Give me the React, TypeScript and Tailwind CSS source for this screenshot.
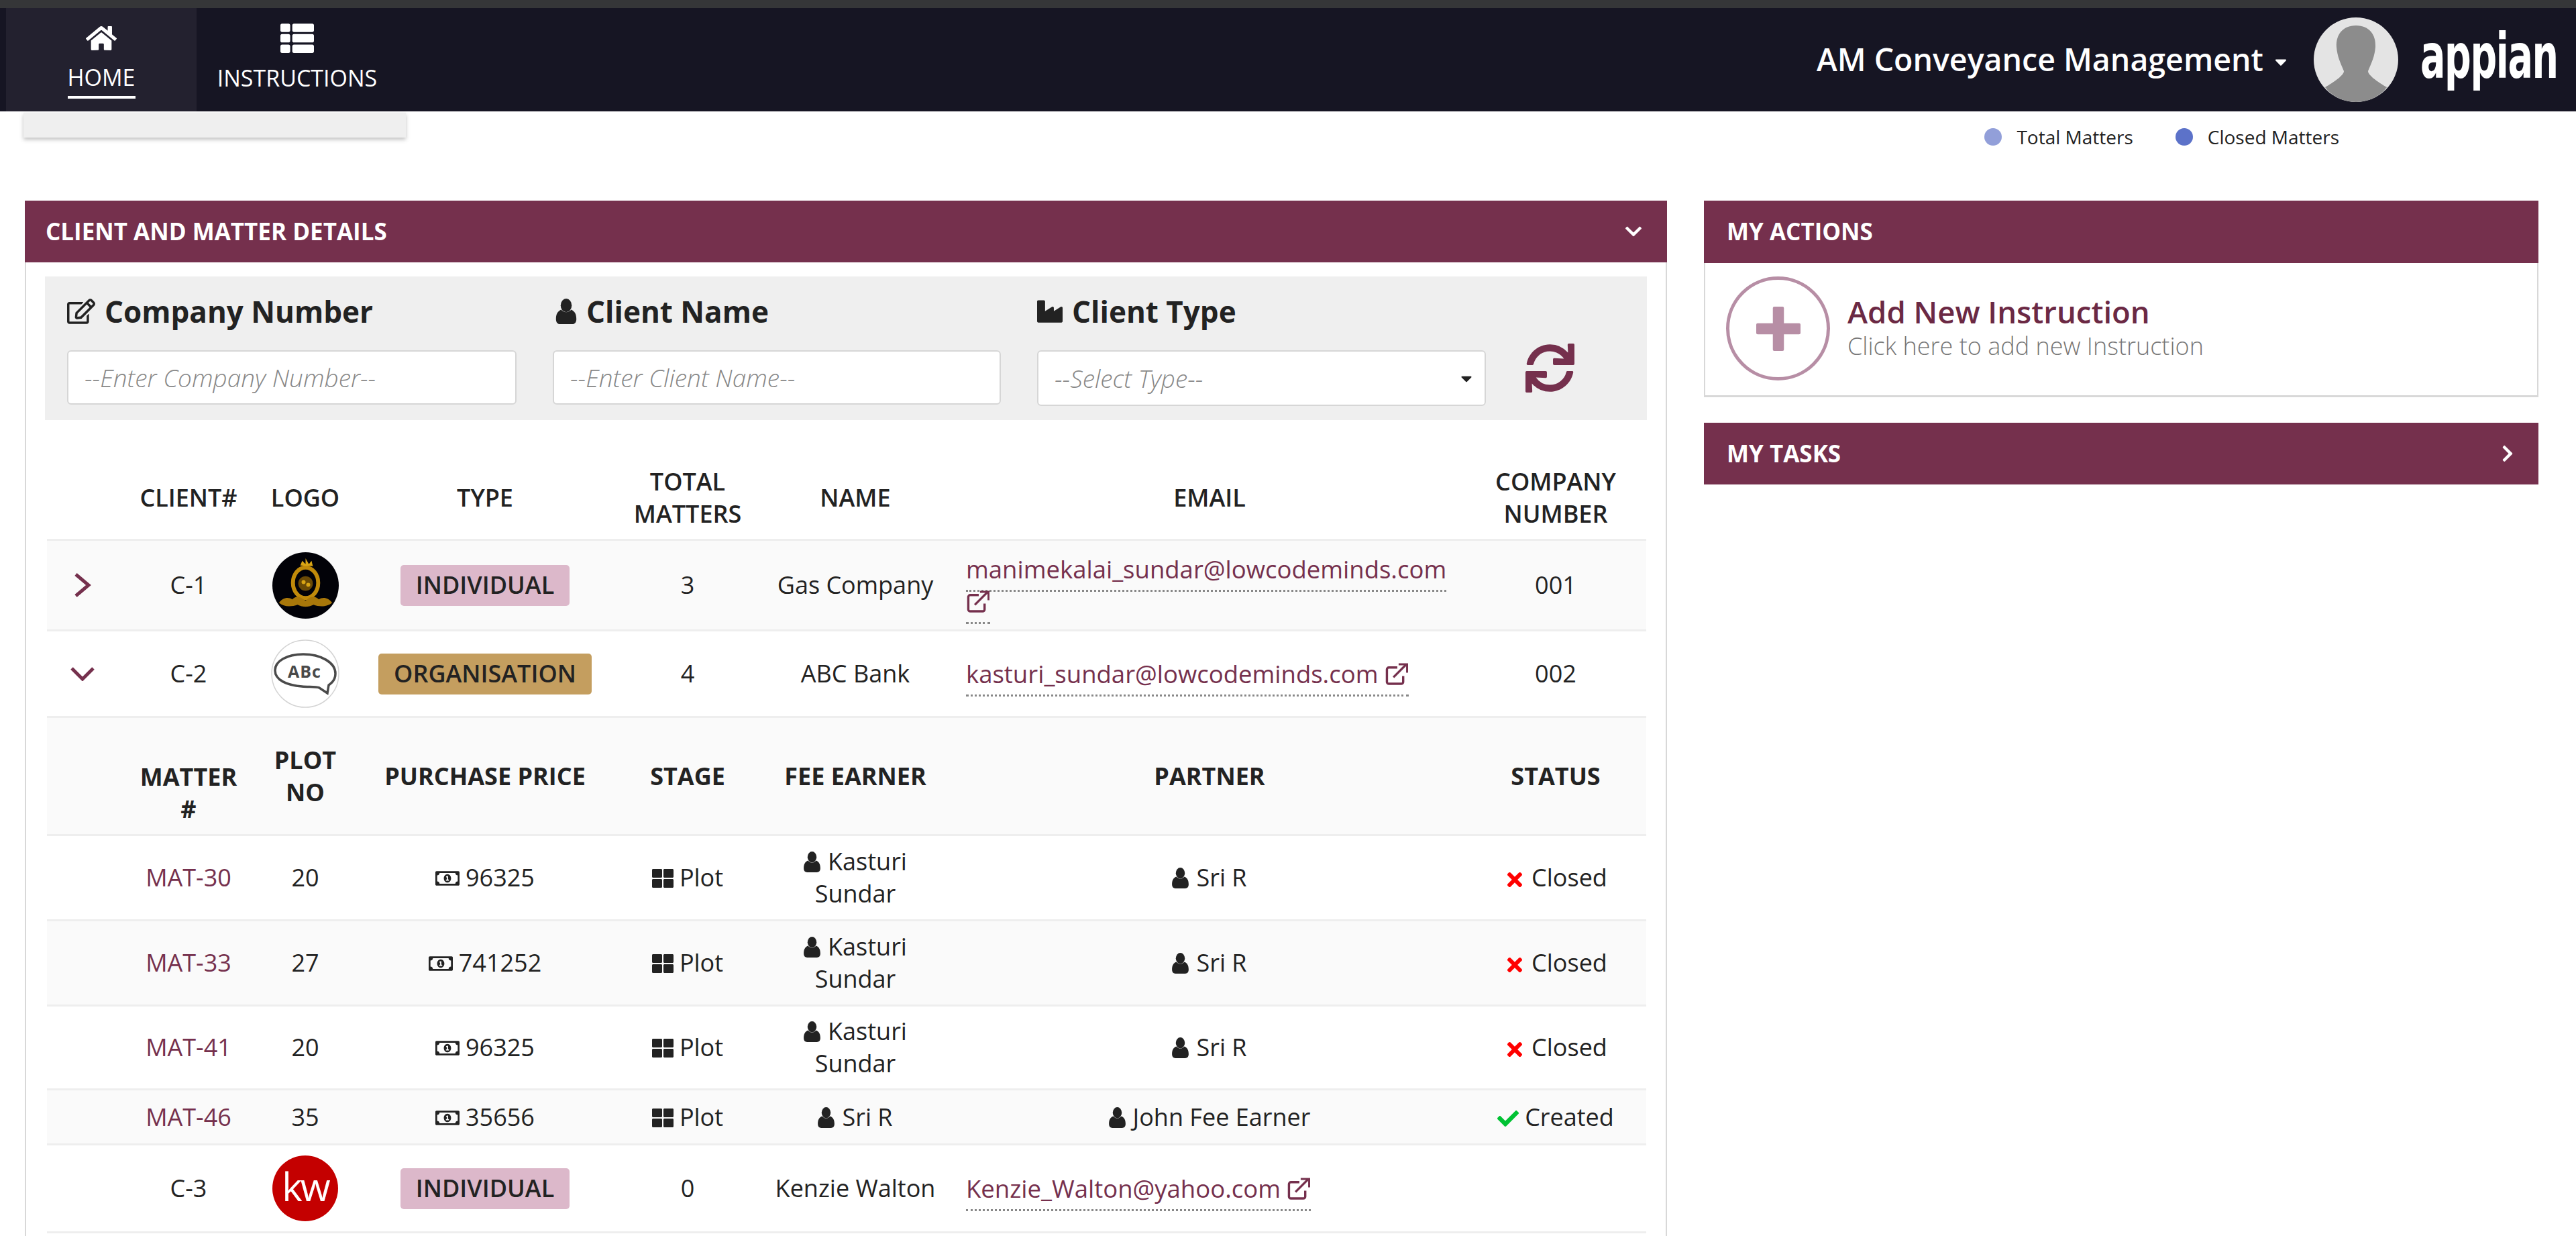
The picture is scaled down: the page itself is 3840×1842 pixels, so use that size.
import {
  FaCaretDown,
  FaCheck,
  FaChevronDown,
  FaChevronRight,
  FaHome,
  FaIndustry,
  FaRegEdit,
  FaRegMoneyBillAlt,
  FaSync,
  FaThLarge,
  FaThList,
  FaTimes,
} from "react-icons/fa";
import type { ReactNode } from "react";

const cols = "grid grid-cols-[106px_210px_138px_398px_206px_294px_762px_270px] items-center text-center";

const matters = [
  { id: "MAT-30", plot: "20", price: "96325", fee: "Kasturi Sundar", partner: "Sri R", closed: true, h: "h-[127px]", bg: "bg-white" },
  { id: "MAT-33", plot: "27", price: "741252", fee: "Kasturi Sundar", partner: "Sri R", closed: true, h: "h-[127px]", bg: "bg-[#fafafa]" },
  { id: "MAT-41", plot: "20", price: "96325", fee: "Kasturi Sundar", partner: "Sri R", closed: true, h: "h-[125px]", bg: "bg-white" },
  { id: "MAT-46", plot: "35", price: "35656", fee: "Sri R", partner: "John Fee Earner", closed: false, h: "h-[82px]", bg: "bg-[#fafafa]" },
];

function Badge({ color, children }: { color: string; children: ReactNode }) {
  return (
    <span className={`inline-flex h-[61px] items-center rounded-[5px] px-[23px] text-[36px] font-semibold text-[#222] ${color}`}>
      {children}
    </span>
  );
}

function UserIcon({ className }: { className: string }) {
  return (
    <svg viewBox="0 0 24 30" className={className} fill="currentColor">
      <ellipse cx="12" cy="8" rx="6.5" ry="8" />
      <path d="M6 13c-4 2-6 5-6 11 0 4 2 6 5 6h14c3 0 5-2 5-6 0-6-2-9-6-11-2 2-4 3-6 3s-4-1-6-3z" />
    </svg>
  );
}

function LinkIcon() {
  return (
    <svg viewBox="0 0 36 34" className="inline h-[33px] w-[36px] align-[-3px]" fill="none" stroke="currentColor" strokeWidth="3.5">
      <path d="M28 20v9a3 3 0 0 1-3 3H6a3 3 0 0 1-3-3V10a3 3 0 0 1 3-3h13" />
      <path d="M13 22L32 3" />
      <path d="M21 2h13v13" strokeWidth="3" />
    </svg>
  );
}

function Email({ text, wrapIcon }: { text: string; wrapIcon?: boolean }) {
  return (
    <div className="pl-[18px] text-left text-[36.5px] leading-[48px] text-[#75304d]">
      <span className="border-b-[3px] border-dotted border-[#888] pb-[6px] [box-decoration-break:clone]">
        {text}
        {wrapIcon ? <br /> : " "}
        <LinkIcon />
      </span>
    </div>
  );
}

function PersonCell({ name }: { name: string }) {
  return (
    <span>
      <UserIcon className="mr-[11px] inline h-[31px] w-[25px] align-[-3px] text-[#222]" />
      {name}
    </span>
  );
}

function RowChevronRight() {
  return (
    <svg viewBox="0 0 26 36" className="h-[36px] w-[26px]" fill="none" stroke="#75304d" strokeWidth="5">
      <path d="M3 2l19 16L3 34" />
    </svg>
  );
}

function RowChevronDown() {
  return (
    <svg viewBox="0 0 36 22" className="h-[22px] w-[36px]" fill="none" stroke="#75304d" strokeWidth="5">
      <path d="M2 3l16 16L34 3" />
    </svg>
  );
}

function GasLogo() {
  return (
    <svg viewBox="0 0 100 100" className="size-[99px]">
      <circle cx="50" cy="50" r="50" fill="#020208" />
      <ellipse cx="50" cy="46" rx="19" ry="23" fill="none" stroke="#c08a0a" strokeWidth="6" />
      <circle cx="50" cy="47" r="11" fill="#6a4a06" />
      <circle cx="47" cy="45" r="3" fill="#d9a514" />
      <circle cx="54" cy="49" r="3" fill="#d9a514" />
      <path d="M42 20l3 -7 5 5 0 -9 5 9 4 -5 2 8z" fill="#d9a514" />
      <path d="M10 76c6 -8 14 -9 20 -5 5 -5 10 -6 20 2 8 -8 15 -7 20 -2 6 -4 14 -3 20 5 -8 7 -20 6 -28 3 -8 4 -16 4 -24 0 -9 3 -20 4 -28 -3z" fill="#a8770a" />
    </svg>
  );
}

function AbcLogo() {
  return (
    <svg viewBox="0 0 102 102" className="size-[102px]">
      <circle cx="51" cy="51" r="50" fill="#fff" stroke="#d4d4d4" strokeWidth="1.5" />
      <path
        d="M6 46c0 -14 18 -24 42 -24 26 0 48 12 48 29 0 8 -4 13 -10 17l-2 12 -12 -8c-6 -2 -16 -1 -26 -2 -22 -2 -40 -9 -40 -24z"
        fill="#fff"
        stroke="#4a4a4a"
        strokeWidth="3.5"
      />
      <text x="50" y="57" textAnchor="middle" fontFamily="Open Sans" fontWeight="700" fontSize="25" fill="#4a4a4a" letterSpacing="1">
        ABc
      </text>
    </svg>
  );
}

function KwLogo() {
  return (
    <div className="flex size-[98px] items-center justify-center rounded-full bg-[#c40000]">
      <span className="mb-[6px] text-[58px] leading-none tracking-[-3px] text-white">kw</span>
    </div>
  );
}

function FilterLabel({ icon, children }: { icon: ReactNode; children: ReactNode }) {
  return (
    <div className="flex h-[110px] items-center gap-[14px] pb-[6px] text-[44px] font-bold text-[#222]">
      {icon}
      {children}
    </div>
  );
}

export default function App() {
  return (
    <div className="h-[1842px] overflow-hidden bg-white font-['Open_Sans',sans-serif] text-[36px] text-[#222]">
      <div className="h-[12px] bg-[#353638]" />
      <nav className="flex h-[154px] items-stretch bg-[#161523] pl-[9px] text-white">
        <div className="flex w-[284px] flex-col items-center bg-[#23212f] pt-[22px]">
          <FaHome className="size-[46px]" />
          <span className="mt-[10px] border-b-[4px] border-white pb-[3px] text-[34px] leading-[50px]">HOME</span>
        </div>
        <div className="flex w-[300px] flex-col items-center pt-[20px]">
          <FaThList className="size-[50px]" />
          <span className="mt-[9px] text-[34px] leading-[50px]">INSTRUCTIONS</span>
        </div>
        <div className="ml-auto flex items-center">
          <span className="text-[46.5px] font-semibold">AM Conveyance Management</span>
          <FaCaretDown className="ml-[12px] mt-[6px] size-[28px]" />
          <div className="relative ml-[35px] size-[126px] overflow-hidden rounded-full bg-[#e4e4e4]">
            <svg viewBox="0 0 126 126" className="size-full">
              <path d="M63 12c-20 0-30 14-29 32 1 14 6 24 11 36 0 6-14 16-28 24 10 14 28 22 46 22s36-8 46-22c-14-8-28-18-28-24 5-12 10-22 11-36 1-18-9-32-29-32z" fill="#8c8c8c" />
            </svg>
          </div>
          <div className="ml-[33px] w-[232px]">
            <span className="mb-[8px] block origin-left scale-x-[0.67] font-['DejaVu_Sans_Condensed','DejaVu_Sans',sans-serif] text-[92px] font-bold leading-[92px] tracking-[-2px]">
              appian
            </span>
          </div>
        </div>
      </nav>

      <div className="flex h-[133px] items-start justify-between">
        <div className="ml-[35px] mt-[2px] h-[37px] w-[570px] bg-[#efefef] shadow-[0_3px_6px_rgba(0,0,0,0.25)]" />
        <div className="mr-[353px] mt-[19px] flex h-[38px] items-center text-[28px]">
          <span className="size-[26px] rounded-full bg-[#929fd9]" />
          <span className="ml-[22px]">Total Matters</span>
          <span className="ml-[63px] size-[26px] rounded-full bg-[#5c72c9]" />
          <span className="ml-[22px]">Closed Matters</span>
        </div>
      </div>

      <div className="flex items-start">
        <section className="ml-[37px] h-[1600px] w-[2448px] border-x-2 border-[#d8d8d8]">
          <header className="-mx-[2px] flex h-[92px] items-center justify-between bg-[#75304d] pl-[31px] pr-[36px] text-[35px] font-bold text-white">
            CLIENT AND MATTER DETAILS
            <FaChevronDown className="size-[28px]" />
          </header>

          <div className="ml-[28px] mt-[21px] flex h-[214px] w-[2388px] items-start bg-[#efefef] pl-[33px]">
            <div className="w-[670px]">
              <FilterLabel icon={<FaRegEdit className="size-[42px]" />}>Company Number</FilterLabel>
              <div className="flex h-[81px] items-center rounded-[6px] border-2 border-[#d6d6d6] bg-white px-[24px] text-[37px] font-light italic text-[#888]">
                --Enter Company Number--
              </div>
            </div>
            <div className="ml-[54px] w-[668px]">
              <FilterLabel icon={<UserIcon className="ml-[4px] h-[38px] w-[32px]" />}>Client Name</FilterLabel>
              <div className="flex h-[81px] items-center rounded-[6px] border-2 border-[#d6d6d6] bg-white px-[24px] text-[37px] font-light italic text-[#888]">
                --Enter Client Name--
              </div>
            </div>
            <div className="ml-[54px] w-[669px]">
              <FilterLabel icon={<FaIndustry className="size-[38px]" />}>Client Type</FilterLabel>
              <div className="flex h-[83px] items-center justify-between rounded-[6px] border-2 border-[#d6d6d6] bg-white pl-[24px] pr-[14px] text-[37px] font-light italic text-[#888]">
                --Select Type--
                <FaCaretDown className="size-[26px] text-[#222]" />
              </div>
            </div>
            <FaSync className="ml-[59px] mt-[100px] size-[73px] text-[#75304d]" />
          </div>

          <div className="ml-[31px] w-[2384px]">
            <div className={`${cols} h-[180px] border-b-[3px] border-[#eeeeee] pt-[54px] text-[36px] font-semibold leading-[48px]`}>
              <div />
              <div>CLIENT#</div>
              <div>LOGO</div>
              <div>TYPE</div>
              <div>TOTAL MATTERS</div>
              <div>NAME</div>
              <div>EMAIL</div>
              <div className="px-[30px]">COMPANY NUMBER</div>
            </div>

            <div className={`${cols} h-[135px] border-b-[3px] border-[#eeeeee] bg-[#fafafa]`}>
              <div className="flex justify-center">
                <RowChevronRight />
              </div>
              <div>C-1</div>
              <div className="flex justify-center"><GasLogo /></div>
              <div><Badge color="bg-[#dcb8ca]">INDIVIDUAL</Badge></div>
              <div>3</div>
              <div>Gas Company</div>
              <Email text="manimekalai_sundar@lowcodeminds.com" wrapIcon />
              <div>001</div>
            </div>

            <div className={`${cols} h-[129px] border-b-[3px] border-[#eeeeee] bg-white`}>
              <div className="flex justify-center">
                <RowChevronDown />
              </div>
              <div>C-2</div>
              <div className="flex justify-center"><AbcLogo /></div>
              <div><Badge color="bg-[#c49e5f]">ORGANISATION</Badge></div>
              <div>4</div>
              <div>ABC Bank</div>
              <Email text="kasturi_sundar@lowcodeminds.com" />
              <div>002</div>
            </div>

            <div className={`${cols} h-[176px] border-b-[3px] border-[#eeeeee] bg-[#fafafa] text-[36px] font-bold leading-[48px]`}>
              <div />
              <div className="px-[20px] pt-[50px]">MATTER #</div>
              <div className="px-[20px]">PLOT NO</div>
              <div>PURCHASE PRICE</div>
              <div>STAGE</div>
              <div>FEE EARNER</div>
              <div>PARTNER</div>
              <div>STATUS</div>
            </div>

            {matters.map((m) => (
              <div key={m.id} className={`${cols} ${m.h} ${m.bg} border-b-[3px] border-[#eeeeee] leading-[48px]`}>
                <div />
                <div className="text-[#75304d]">{m.id}</div>
                <div>{m.plot}</div>
                <div>
                  <FaRegMoneyBillAlt className="mr-[9px] inline size-[36px] align-[-6px]" />
                  {m.price}
                </div>
                <div>
                  <FaThLarge className="mr-[9px] inline size-[32px] align-[-4px]" />
                  Plot
                </div>
                <div className="px-[30px]"><PersonCell name={m.fee} /></div>
                <div><PersonCell name={m.partner} /></div>
                <div>
                  {m.closed ? (
                    <FaTimes className="mr-[9px] inline size-[32px] align-[-6px] text-[#ff0000]" />
                  ) : (
                    <FaCheck className="mr-[9px] inline size-[32px] align-[-5px] text-[#00c233]" />
                  )}
                  {m.closed ? "Closed" : "Created"}
                </div>
              </div>
            ))}

            <div className={`${cols} h-[131px] border-b-[3px] border-[#eeeeee] bg-white`}>
              <div />
              <div>C-3</div>
              <div className="flex justify-center"><KwLogo /></div>
              <div><Badge color="bg-[#dcb8ca]">INDIVIDUAL</Badge></div>
              <div>0</div>
              <div>Kenzie Walton</div>
              <Email text="Kenzie_Walton@yahoo.com" />
              <div />
            </div>
          </div>
        </section>

        <aside className="ml-[55px] flex w-[1244px] flex-col gap-[38px]">
          <div className="h-[293px] border-x-2 border-b-[3px] border-[#d8d8d8]">
            <header className="-mx-[2px] flex h-[93px] items-center bg-[#75304d] pl-[34px] text-[35px] font-bold text-white">
              MY ACTIONS
            </header>
            <div className="flex items-center pl-[31px] pt-[20px]">
              <div className="flex size-[155px] items-center justify-center rounded-full border-[5px] border-[#b78ea5]">
                <svg viewBox="0 0 64 64" className="size-[66px] fill-[#b78ea5]">
                  <path d="M24 2a2 2 0 0 1 2-2h12a2 2 0 0 1 2 2v22h22a2 2 0 0 1 2 2v12a2 2 0 0 1-2 2H40v22a2 2 0 0 1-2 2H26a2 2 0 0 1-2-2V40H2a2 2 0 0 1-2-2V26a2 2 0 0 1 2-2h22z" />
                </svg>
              </div>
              <div className="ml-[26px] -mt-[6px]">
                <div className="text-[45.5px] font-semibold leading-[58px] text-[#6b2944]">Add New Instruction</div>
                <div className="text-[36px] font-light leading-[46px] text-[#777]">Click here to add new Instruction</div>
              </div>
            </div>
          </div>
          <header className="flex h-[92px] items-center justify-between bg-[#75304d] pl-[34px] pr-[32px] text-[35px] font-bold text-white">
            MY TASKS
            <FaChevronRight className="size-[28px]" />
          </header>
        </aside>
      </div>
    </div>
  );
}
